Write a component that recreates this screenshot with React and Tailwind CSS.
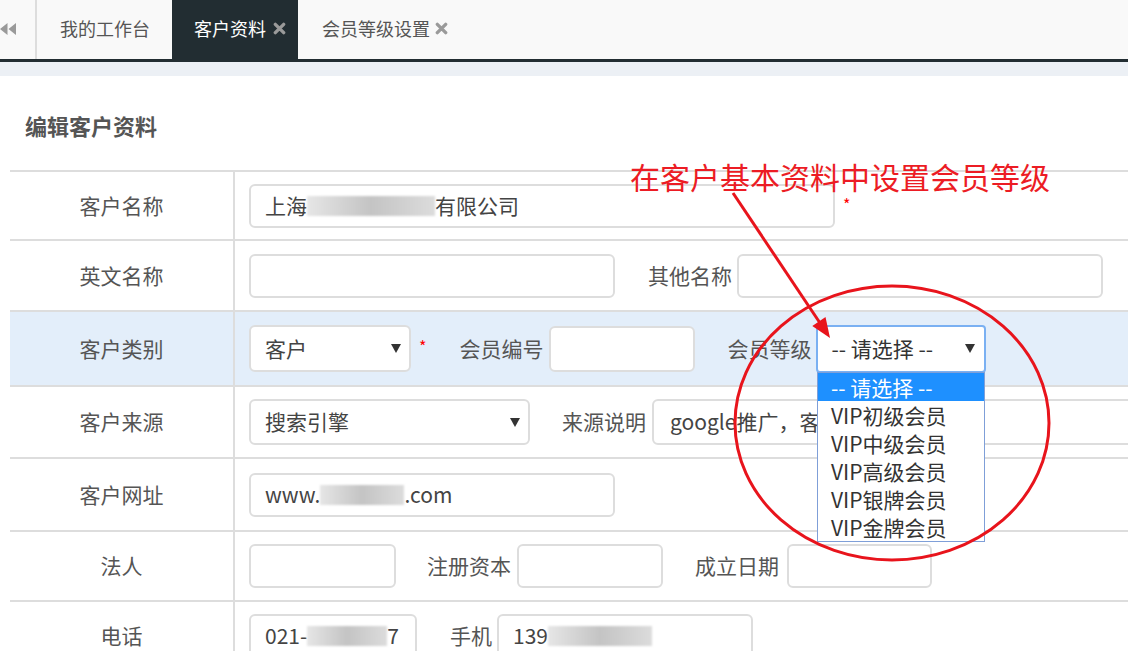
import React from "react";

function XIcon({ className }) {
  return (
    <svg viewBox="0 0 14 14" className={className}>
      <path d="M2.5 2.5 L11.5 11.5 M11.5 2.5 L2.5 11.5" stroke="currentColor" strokeWidth="3.6" strokeLinecap="round" />
    </svg>
  );
}

function Tri() {
  return (
    <svg viewBox="0 0 10 9" className="w-[10px] h-[9px] shrink-0">
      <path d="M0 0 L10 0 L5 9 Z" fill="#333" />
    </svg>
  );
}

function Blur({ className }) {
  return (
    <span
      className={
        "inline-block h-[20px] bg-linear-to-r from-[#e6e6e6] via-[#c4c4c4] to-[#dcdcdc] blur-[1.2px] " +
        className
      }
    />
  );
}

function Label({ children }) {
  return (
    <div className="w-[225px] h-full shrink-0 border-r-2 border-[#ddd] flex items-center justify-center text-[21px] text-[#555]">
      {children}
    </div>
  );
}

function Row({ className, children }) {
  return <div className={"flex border-b-2 border-[#ddd] " + className}>{children}</div>;
}

const inputBase =
  "shrink-0 border-2 border-[#ddd] rounded-[6px] bg-white flex items-center text-[21px] text-[#444] whitespace-nowrap overflow-hidden";

function Star({ className }) {
  return <span className={"text-[#f00] text-[16px] leading-none self-start " + className}>*</span>;
}

export default function App() {
  return (
    <div className="relative w-[1128px] h-[651px] overflow-hidden bg-white font-['Noto_Sans_CJK_SC','Noto_Sans',sans-serif]">
      {/* Tab bar */}
      <div className="h-[62px] flex bg-[#f9f9f9] border-b-[3px] border-[#222d32]">
        <div className="w-[37px] shrink-0 border-r-2 border-[#ddd] flex items-center">
          <svg viewBox="0 0 16 12" className="w-[16px] h-[12px] -mt-[2px]">
            <path d="M7.5 0 L7.5 12 L0 6 Z M16 0 L16 12 L8.5 6 Z" fill="#9a9a9a" />
          </svg>
        </div>
        <div className="w-[135px] flex items-center pl-[23px] pb-[3px] text-[18px] text-[#555]">我的工作台</div>
        <div className="w-[126px] flex items-center pl-[22px] pb-[3px] bg-[#222d32] text-[18px] text-white">
          客户资料
          <XIcon className="w-[13px] h-[13px] ml-[7px] text-[#9a9a9a]" />
        </div>
        <div className="flex items-center pl-[24px] pb-[3px] text-[18px] text-[#555]">
          会员等级设置
          <XIcon className="w-[13px] h-[13px] ml-[5px] text-[#9a9a9a]" />
        </div>
      </div>
      <div className="h-[14px] bg-[#ecf0f5]" />

      {/* Content */}
      <h2 className="mt-[34px] ml-[25px] h-[30px] leading-[30px] text-[22px] font-bold text-[#555]">编辑客户资料</h2>

      <div className="mt-[30px] ml-[10px] w-[1118px] border-t-2 border-[#ddd]">
        {/* Row 1 */}
        <Row className="h-[69px]">
          <Label>客户名称</Label>
          <div className="flex items-center pl-[14px]">
            <div className={inputBase + " w-[586px] h-[44px] pl-[14px]"}>
              上海
              <Blur className="w-[128px]" />
              有限公司
            </div>
            <Star className="ml-[8px] mt-[24px]" />
          </div>
        </Row>

        {/* Row 2 */}
        <Row className="h-[71px]">
          <Label>英文名称</Label>
          <div className="flex items-center pl-[14px]">
            <div className={inputBase + " w-[366px] h-[44px]"} />
            <span className="ml-[33px] text-[21px] text-[#555] whitespace-nowrap">其他名称</span>
            <div className={inputBase + " ml-[5px] w-[366px] h-[44px]"} />
          </div>
        </Row>

        {/* Row 3 */}
        <Row className="h-[75px] bg-[#e3eefa]">
          <Label>客户类别</Label>
          <div className="flex items-center pl-[14px]">
            <div className={inputBase + " w-[162px] h-[47px] pl-[14px] pr-[8px] justify-between"}>
              <span>客户</span>
              <Tri />
            </div>
            <Star className="ml-[8px] mt-[26px]" />
            <span className="ml-[33px] text-[21px] text-[#555] whitespace-nowrap">会员编号</span>
            <div className={inputBase + " ml-[6px] w-[146px] h-[46px]"} />
            <span className="ml-[32px] text-[21px] text-[#555] whitespace-nowrap">会员等级</span>
            <div className="ml-[5px] w-[170px] h-[48px] shrink-0 border-2 border-[#7ab0f2] rounded-[4px] bg-white flex items-center justify-between pl-[13px] pr-[9px] text-[21px] text-[#333] whitespace-nowrap">
              <span>-- 请选择 --</span>
              <Tri />
            </div>
          </div>
        </Row>

        {/* Row 4 */}
        <Row className="h-[72px]">
          <Label>客户来源</Label>
          <div className="flex items-center pl-[14px]">
            <div className={inputBase + " w-[281px] h-[46px] pl-[14px] pr-[8px] justify-between"}>
              <span>搜索引擎</span>
              <Tri />
            </div>
            <span className="ml-[32px] text-[21px] text-[#555] whitespace-nowrap">来源说明</span>
            <div className={inputBase + " ml-[6px] w-[560px] h-[46px] pl-[16px]"}>google推广，客户主动联系</div>
          </div>
        </Row>

        {/* Row 5 */}
        <Row className="h-[73px]">
          <Label>客户网址</Label>
          <div className="flex items-center pl-[14px]">
            <div className={inputBase + " w-[366px] h-[44px] pl-[14px]"}>
              www.
              <Blur className="w-[84px]" />
              .com
            </div>
          </div>
        </Row>

        {/* Row 6 */}
        <Row className="h-[70px]">
          <Label>法人</Label>
          <div className="flex items-center pl-[14px]">
            <div className={inputBase + " w-[147px] h-[44px]"} />
            <span className="ml-[31px] text-[21px] text-[#555] whitespace-nowrap">注册资本</span>
            <div className={inputBase + " ml-[6px] w-[146px] h-[44px]"} />
            <span className="ml-[32px] text-[21px] text-[#555] whitespace-nowrap">成立日期</span>
            <div className={inputBase + " ml-[8px] w-[145px] h-[44px]"} />
          </div>
        </Row>

        {/* Row 7 */}
        <Row className="h-[70px]">
          <Label>电话</Label>
          <div className="flex items-center pl-[14px]">
            <div className={inputBase + " w-[168px] h-[44px] pl-[14px]"}>
              021-
              <Blur className="w-[80px]" />
              7
            </div>
            <span className="ml-[33px] text-[21px] text-[#555] whitespace-nowrap">手机</span>
            <div className={inputBase + " ml-[5px] w-[256px] h-[44px] pl-[14px]"}>
              139
              <Blur className="w-[104px]" />
            </div>
          </div>
        </Row>
      </div>

      {/* Dropdown list */}
      <div className="absolute left-[817px] top-[372px] w-[168px] border border-[#7f9fd8] bg-white text-[21px] text-[#333] whitespace-nowrap">
        <div className="h-[28px] leading-[28px] pl-[13px] bg-[#1e90ff] text-white">-- 请选择 --</div>
        <div className="h-[28px] leading-[28px] pl-[13px]">VIP初级会员</div>
        <div className="h-[28px] leading-[28px] pl-[13px]">VIP中级会员</div>
        <div className="h-[28px] leading-[28px] pl-[13px]">VIP高级会员</div>
        <div className="h-[28px] leading-[28px] pl-[13px]">VIP银牌会员</div>
        <div className="h-[28px] leading-[28px] pl-[13px]">VIP金牌会员</div>
      </div>

      {/* Annotation */}
      <div className="absolute left-[630px] top-[158px] text-[30px] leading-[36px] text-[#ec1c24] whitespace-nowrap">
        在客户基本资料中设置会员等级
      </div>
      <svg className="absolute left-0 top-0 w-[1128px] h-[651px] pointer-events-none" viewBox="0 0 1128 651">
        <ellipse cx="892" cy="423" rx="157" ry="137" fill="none" stroke="#e8141c" strokeWidth="3" />
        <line x1="733" y1="193" x2="820" y2="323" stroke="#e8141c" strokeWidth="3" />
        <polygon points="830,338 812.3,325.9 825.5,317" fill="#e8141c" />
      </svg>
    </div>
  );
}
